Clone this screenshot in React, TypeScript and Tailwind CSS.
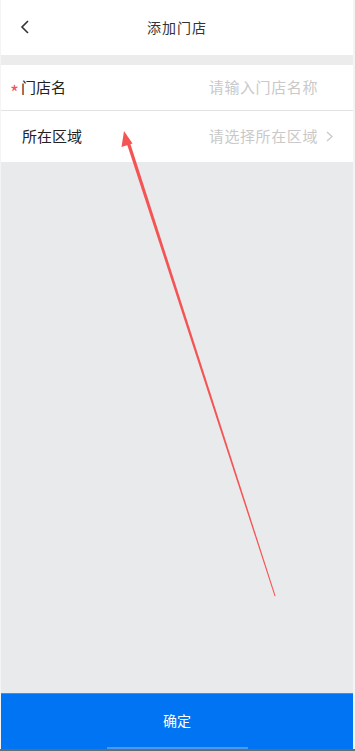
import React from "react";

const font = { fontFamily: '"Noto Sans CJK SC", "Noto Sans", sans-serif' };

export default function App() {
  return (
    <div className="relative w-[355px] h-[751px] bg-[#f4f4f4] overflow-hidden" style={font}>
      <div className="ml-px w-[352px] h-[749px] flex flex-col bg-[#e9eaec]">
        {/* header */}
        <div className="h-[55px] bg-white flex items-center relative">
          <svg className="absolute left-[19px] top-[20px]" width="10" height="14" viewBox="0 0 10 14">
            <path d="M8 1 L2 7 L8 13" fill="none" stroke="#333" strokeWidth="1.6" />
          </svg>
          <div className="flex-1 text-center text-[14px] text-[#333] tracking-[1px]">添加门店</div>
        </div>
        <div className="h-[10px] bg-[#ececec]" />

        {/* form */}
        <div className="bg-white">
          <div className="h-[46px] flex items-center border-b border-[#e2e2e2]">
            <span className="w-[11px] pl-[9px] text-[#f25555] text-[19px] leading-none mt-[8px] box-content">*</span>
            <span className="text-[15px] text-[#222]">门店名</span>
            <span className="ml-auto mr-[35px] text-[15px] tracking-[0.6px] text-[#c9c9c9]">请输入门店名称</span>
          </div>
          <div className="h-[51px] flex items-center">
            <span className="pl-[21px] text-[15px] text-[#222]">所在区域</span>
            <span className="ml-auto text-[15px] tracking-[0.6px] text-[#c9c9c9]">请选择所在区域</span>
            <svg className="ml-[8px] mr-[20px]" width="7" height="11" viewBox="0 0 7 11">
              <path d="M1 1 L6 5.5 L1 10" fill="none" stroke="#c9c9c9" strokeWidth="1.3" />
            </svg>
          </div>
        </div>

        <div className="flex-1" />

        {/* bottom button */}
        <div className="h-[56px] bg-[#0074f2] flex flex-col items-center relative">
          <div className="h-px w-full bg-[#3e8ff0]" />
          <div className="flex-1 flex items-center text-white text-[14px] -mt-[2px]">确定</div>
          <div className="absolute bottom-0 left-[106px] w-[141px] h-[2px] bg-[#4a9af5]" />
        </div>
      </div>
      <div className="h-[2px] bg-[#6b6b6b]" />

      {/* annotation arrow */}
      <svg className="absolute inset-0 pointer-events-none" width="355" height="751" viewBox="0 0 355 751">
        <polygon points="125.8,140.4 129,139.4 275.6,596 274.6,596.2" fill="#f55454" />
        <polygon points="124,131 121.5,147 132.5,143.5" fill="#f55454" />
      </svg>
    </div>
  );
}
